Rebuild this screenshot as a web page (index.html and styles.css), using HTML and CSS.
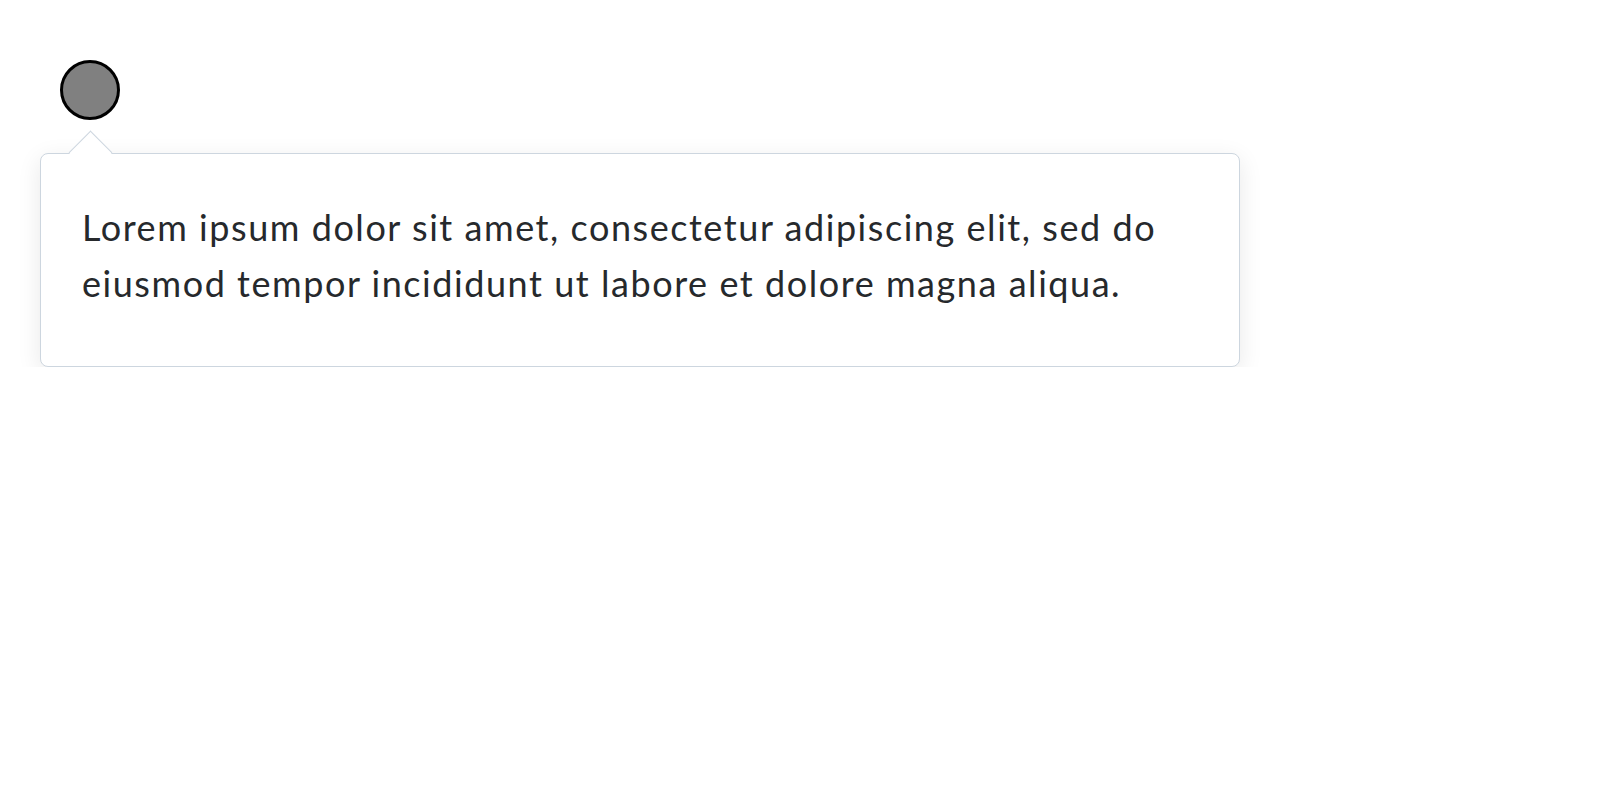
FILE: index.html
```html
<!DOCTYPE html>
<html lang="en">
<head>
<meta charset="utf-8">
<title>Popover</title>
<link rel="stylesheet" href="styles.css">
</head>
<body>
<div class="stage">
  <div class="trigger" aria-label="trigger"></div>
  <div class="popover">
    <span class="arrow"></span>
    <p class="popover-text">Lorem ipsum dolor sit amet, consectetur adipiscing elit, sed do eiusmod tempor incididunt ut labore et dolore magna aliqua.</p>
  </div>
</div>
</body>
</html>
```
FILE: styles.css
```css
html, body {
  margin: 0;
  padding: 0;
  background: #ffffff;
}
body {
  font-family: Lato, "Open Sans", sans-serif;
}
.stage {
  padding: 60px 0 0 40px;
  display: flex;
  flex-direction: column;
  align-items: flex-start;
}
.trigger {
  width: 60px;
  height: 60px;
  box-sizing: border-box;
  margin-left: 20px;
  border-radius: 50%;
  background: #808080;
  border: 3px solid #000000;
}
.popover {
  position: relative;
  margin-top: 33px;
  width: 1200px;
  height: 214px;
  box-sizing: border-box;
  background: #ffffff;
  border: 1px solid #cdd6df;
  border-radius: 8px;
  box-shadow: 0 6px 24px rgba(0, 0, 0, 0.09);
  padding: 45px 40px 45px 41px;
}
.arrow {
  position: absolute;
  left: 34px;
  top: -17px;
  width: 31px;
  height: 31px;
  box-sizing: border-box;
  background: #ffffff;
  border-top: 1px solid #cdd6df;
  border-left: 1px solid #cdd6df;
  transform: rotate(45deg);
}
.popover-text {
  position: relative;
  margin: 0;
  font-size: 36px;
  letter-spacing: 1.55px;
  line-height: 56px;
  color: #26292c;
}
```
